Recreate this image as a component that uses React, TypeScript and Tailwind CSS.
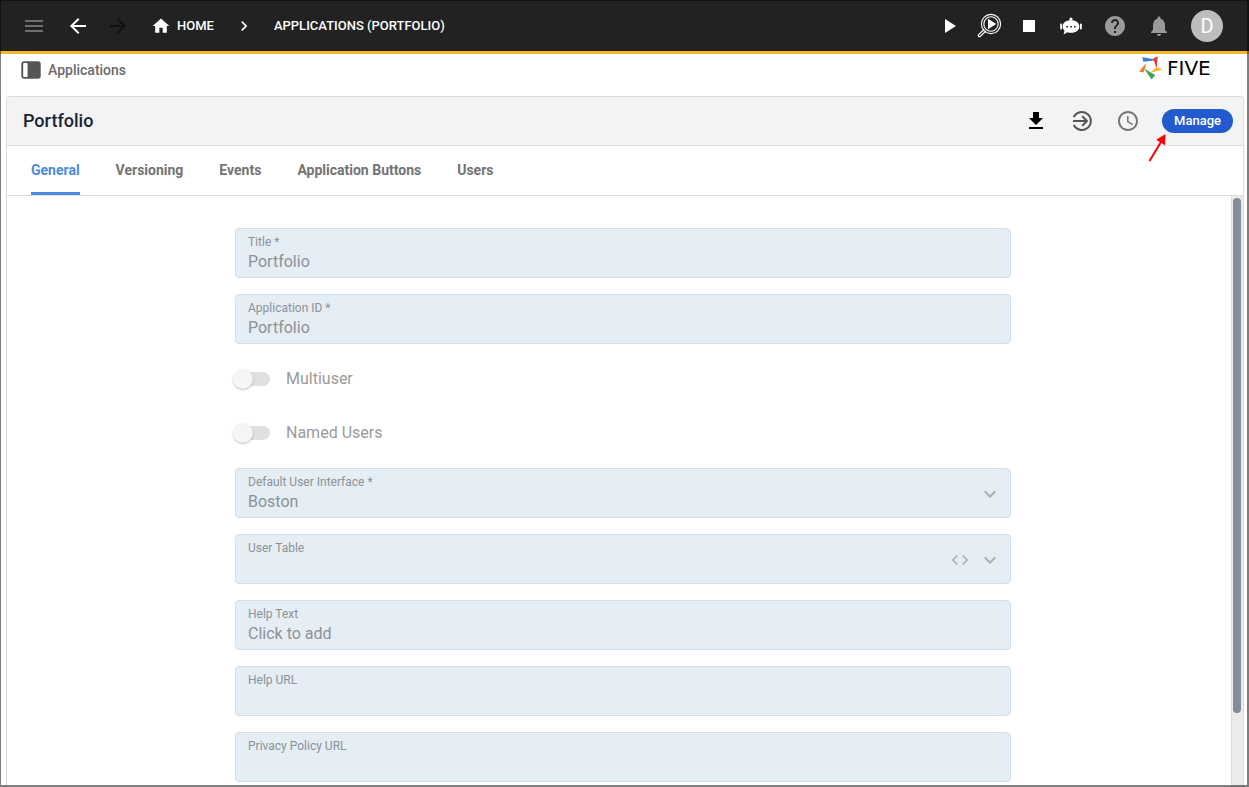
import { useState } from 'react';
import type { ReactNode } from 'react';
import {
  MdArrowBack,
  MdArrowForward,
  MdChevronRight,
  MdCode,
  MdExpandMore,
  MdGetApp,
  MdHelp,
  MdHome,
  MdMenu,
  MdNotifications,
  MdPlayArrow,
  MdSchedule,
  MdStop,
} from 'react-icons/md';

const TABS = ['General', 'Versioning', 'Events', 'Application Buttons', 'Users'];

function InspectIcon() {
  return (
    <svg width="26" height="26" viewBox="0 0 26 26" fill="none" stroke="#fff">
      <circle cx="15" cy="11" r="9.6" strokeWidth="1.1" />
      <circle cx="15" cy="11" r="7.2" strokeWidth="1.1" />
      <path d="M12 5.8v10.4l8.2-5.2z" fill="#fff" stroke="none" />
      <path d="M8.2 16.2 2.4 21.8c-.7.8.8 2.4 1.7 1.7l6-5.6" strokeWidth="1.2" />
    </svg>
  );
}

function BotIcon() {
  return (
    <svg width="24" height="24" viewBox="0 0 24 24" fill="#fff">
      <circle cx="12" cy="5" r="1.6" />
      <path d="M11.4 5h1.2v3h-1.2z" />
      <path d="M12 6.2c5.2 0 8.400 2.700 8.400 6.300s-3.200 6.300-8.400 6.300c-1.400 0-2.600-.2-3.700-.6L4.600 20.600l.9-3.900c-1.200-1.100-1.900-2.600-1.900-4.200 0-3.600 3.200-6.300 8.400-6.300z" />
      <rect x="1.200" y="9.500" width="1.800" height="6" rx=".8" />
      <rect x="21" y="9.500" width="1.800" height="6" rx=".8" />
      <g fill="#222">
        <circle cx="8.200" cy="12.700" r=".9" />
        <circle cx="12" cy="12.700" r=".9" />
        <circle cx="15.800" cy="12.700" r=".9" />
      </g>
    </svg>
  );
}

function PanelIcon() {
  return (
    <svg width="20" height="18" viewBox="0 0 20 18">
      <rect x="1" y="1" width="18" height="16" rx="2" fill="#555" stroke="#555" strokeWidth="1.400" />
      <rect x="2.200" y="2" width="4.400" height="14" rx="1" fill="#fff" />
    </svg>
  );
}

function EnterIcon() {
  return (
    <svg width="24" height="24" viewBox="0 0 24 24" fill="none" stroke="#555" strokeWidth="2">
      <path d="M3.700 8.200A9 9 0 1 1 3.700 15.800" />
      <path d="M3 12h13.500M12.200 7.200 17 12l-4.800 4.800" />
    </svg>
  );
}

function FiveMark() {
  return (
    <svg width="24" height="24" viewBox="0 0 24 24">
      <path d="M3.400 1 17 3.800 16.500 4.600 4.200 5.800z" fill="#3b7ddd" />
      <path d="M14.200 2.200 18.700.4 17.600 12.800z" fill="#e53935" />
      <path d="M17.200 11 23.600 13.400 11.800 16.600z" fill="#fbb524" />
      <path d="M5 12.400 16.200 19 12.600 23.600z" fill="#3fa556" />
      <path d="M7.600 6.800 4.600 16.600 0 15.400z" fill="#f57c2a" />
    </svg>
  );
}

type FieldProps = {
  id: string;
  label: string;
  value?: string;
  select?: boolean;
  icons?: ReactNode;
};

function Field({ id, label, value = '', select, icons }: FieldProps) {
  return (
    <div className="flex h-[50px] items-center rounded border border-[#cfdfee] bg-[#e5edf5] px-3 text-[#8c9297]">
      <div className="flex min-w-0 flex-1 flex-col pt-0.5">
        <label htmlFor={id} className="text-xs leading-4">
          {label}
        </label>
        {select ? (
          <select id={id} disabled defaultValue={value} className="h-6 w-full appearance-none bg-transparent text-base opacity-100">
            <option value={value}>{value}</option>
          </select>
        ) : (
          <input id={id} disabled defaultValue={value} className="h-6 w-full bg-transparent text-base" />
        )}
      </div>
      {icons && <div className="-mr-1 flex items-center gap-2 pt-px text-[#a9b0b6]">{icons}</div>}
    </div>
  );
}

function Toggle({ id, label }: { id: string; label: string }) {
  return (
    <div className="flex h-[38px] items-center gap-4">
      <input
        id={id}
        type="checkbox"
        role="switch"
        disabled
        className="relative ml-px h-3.5 w-[34px] appearance-none rounded-full bg-[#e0e0e0] before:absolute before:-left-[3px] before:-top-[3px] before:size-5 before:rounded-full before:bg-[#f5f5f5] before:shadow-[0_1px_2px_rgba(0,0,0,0.25)]"
      />
      <label htmlFor={id} className="text-base text-[#9b9b9b]">
        {label}
      </label>
    </div>
  );
}

export default function App() {
  const [activeTab, setActiveTab] = useState('General');

  return (
    <div className="relative flex h-screen flex-col overflow-hidden bg-white font-[Roboto,sans-serif]">
      {/* Top bar */}
      <header className="flex h-[54px] shrink-0 items-center justify-between border-b-3 border-[#fbb826] bg-[#222] pl-[22px] pr-[26px] text-white">
        <nav className="flex items-center">
          <button aria-label="Menu" className="text-[#6f6f6f]">
            <MdMenu size={24} />
          </button>
          <button aria-label="Back" className="ml-5">
            <MdArrowBack size={24} />
          </button>
          <button aria-label="Forward" disabled className="ml-4 text-[#111]">
            <MdArrowForward size={24} />
          </button>
          <a href="#home" className="ml-5 flex items-center gap-1.5 pl-px text-[13px] font-medium">
            <MdHome size={20} />
            HOME
          </a>
          <MdChevronRight size={20} className="mx-5" />
          <a href="#applications" className="text-[13px] font-medium">
            APPLICATIONS (PORTFOLIO)
          </a>
        </nav>
        <div className="flex items-center gap-5">
          <div className="-mr-0.5 flex items-center gap-[15px]">
            <button aria-label="Run">
              <MdPlayArrow size={24} />
            </button>
            <button aria-label="Inspect">
              <InspectIcon />
            </button>
            <button aria-label="Stop">
              <MdStop size={24} />
            </button>
          </div>
          <button aria-label="Assistant">
            <BotIcon />
          </button>
          <button aria-label="Help" className="text-[#9a9a9a]">
            <MdHelp size={24} />
          </button>
          <button aria-label="Notifications" className="text-[#9a9a9a]">
            <MdNotifications size={24} />
          </button>
          <button className="size-8 rounded-full bg-[#bdbdbd] text-xl leading-8">D</button>
        </div>
      </header>

      {/* Section name and logo */}
      <div className="flex h-[42px] shrink-0 items-start justify-between pl-[21px] pr-[22px]">
        <div className="flex h-8 items-center gap-[7px] text-sm font-medium text-[#6b6b6b]">
          <PanelIcon />
          Applications
        </div>
        <div className="flex h-7 items-center gap-1">
          <FiveMark />
          <span className="w-[60px] font-['DejaVu_Sans',sans-serif] text-xl leading-7 text-black">FIVE</span>
        </div>
      </div>

      <main className="ml-1.5 mr-[5px] flex min-h-0 flex-1 flex-col rounded-t border border-b-0 border-[#dcdcdc]">
        <div className="flex h-[49px] shrink-0 items-center justify-between rounded-t border-b border-[#dcdcdc] bg-[#f1f3f5] pl-4 pr-2.5">
          <h1 className="text-lg font-medium text-[#1a2333]">Portfolio</h1>
          <div className="flex items-center gap-[22px]">
            <button aria-label="Download" className="text-black">
              <MdGetApp size={24} />
            </button>
            <button aria-label="Open">
              <EnterIcon />
            </button>
            <button aria-label="History" className="text-[#757575]">
              <MdSchedule size={24} />
            </button>
            <div className="relative">
              <button className="block h-6 rounded-full bg-[#235bcf] px-3 text-[13px] font-medium text-white">
                Manage
              </button>
              <svg className="absolute -left-4 top-full" width="24" height="30" viewBox="0 0 24 30">
                <path d="M3.500 28 15 9" stroke="#f00" strokeWidth="2" />
                <path d="M19.500 1 19 12.200 10.200 6.800z" fill="#f00" />
              </svg>
            </div>
          </div>
        </div>

        <div role="tablist" className="flex h-[50px] shrink-0 gap-9 border-b border-[#dcdcdc] pl-6">
          {TABS.map((tab) => (
            <button
              key={tab}
              role="tab"
              aria-selected={activeTab === tab}
              onClick={() => setActiveTab(tab)}
              className={
                activeTab === tab
                  ? 'border-b-3 border-[#4a8bdc] pt-px text-sm font-bold text-[#4a8bdc]'
                  : 'border-b-3 border-transparent pt-px text-sm font-bold text-[#737373]'
              }
            >
              {tab}
            </button>
          ))}
        </div>

        <div className="flex min-h-0 flex-1">
          <div className="min-w-0 flex-1 overflow-hidden pl-2">
            <form className="mx-auto flex max-w-[776px] flex-col gap-4 pt-8">
              <Field id="title" label="Title *" value="Portfolio" />
              <Field id="application-id" label="Application ID *" value="Portfolio" />
              <Toggle id="multiuser" label="Multiuser" />
              <Toggle id="named-users" label="Named Users" />
              <Field
                id="default-ui"
                label="Default User Interface *"
                value="Boston"
                select
                icons={<MdExpandMore size={24} />}
              />
              <Field
                id="user-table"
                label="User Table"
                select
                icons={
                  <>
                    <MdCode size={20} />
                    <MdExpandMore size={24} />
                  </>
                }
              />
              <Field id="help-text" label="Help Text" value="Click to add" />
              <Field id="help-url" label="Help URL" />
              <Field id="privacy-url" label="Privacy Policy URL" />
            </form>
          </div>
          {/* Scroll track */}
          <div className="w-3 shrink-0 border-l border-[#dcdcdc] bg-[#ebebeb] px-px pt-0.5">
            <div className="h-[87.5%] w-2 rounded-full bg-[#838b9c]" />
          </div>
        </div>
      </main>

      {/* Window frame */}
      <div className="pointer-events-none absolute inset-0 border-b-2 border-l border-r-2 border-t border-black/50" />
    </div>
  );
}
